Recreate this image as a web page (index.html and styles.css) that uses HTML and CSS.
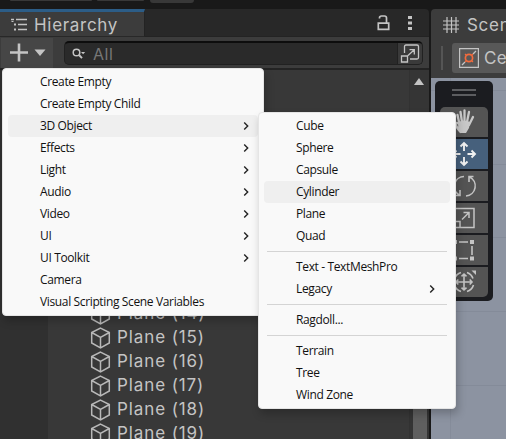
FILE: index.html
```html
<!DOCTYPE html>
<html lang="en">
<head>
<meta charset="utf-8">
<title>Hierarchy</title>
<link rel="stylesheet" href="styles.css">
</head>
<body>
<svg class="defs" aria-hidden="true">
  <symbol id="cube" viewBox="0 0 20 22"><path d="M10 1.2 18.8 5.5V16L10 20.8 1.2 16V5.5ZM1.2 5.5 10 10.3 18.8 5.5M10 10.3V20.8"/></symbol>
  <symbol id="chev" viewBox="0 0 6 8"><path d="M1.2.5 4.7 4 1.2 7.5"/></symbol>
</svg>
<div class="editor">
  <div class="topbar"><i class="b1"></i><i class="b2"></i><i class="b3"></i></div>
  <div class="panels">
    <section class="hierarchy">
      <header class="tabs">
        <div class="tab">
          <svg width="17" height="14" viewBox="0 0 17 14"><path d="M0 1.5h3M5 1.5h11M7 6.5h9M7 11.5h9" stroke="#c4c4c4" stroke-width="1.5"/><path d="M3 6.5h2M3 11.5h2M1.5 3v1" stroke="#c4c4c4" stroke-width="2"/></svg>
          <span>Hierarchy</span>
        </div>
        <div class="tabtools">
          <svg width="13" height="16" viewBox="0 0 13 16"><path d="M1.300 8.200h10.400v6.200H1.300zM2.500 3.500V3Q2.500 1 4.500 1h3Q9.500 1 9.500 3v5" fill="none" stroke="#c4c4c4" stroke-width="1.700"/></svg>
          <svg width="4" height="16" viewBox="0 0 4 16"><path d="M0 1h4v3H0zM0 6.500h4v3H0zM0 12h4v3H0z" fill="#c4c4c4"/></svg>
        </div>
      </header>
      <div class="toolbar">
        <div class="add">
          <svg width="52" height="30" viewBox="0 0 52 30"><path d="M9 14.500h18M18 5.500v18" stroke="#c4c4c4" stroke-width="2.600"/><path d="M33.500 11.500h11l-5.500 6.500z" fill="#c4c4c4"/></svg>
        </div>
        <div class="search">
          <svg class="mag" width="14" height="12" viewBox="0 0 14 12"><circle cx="4.500" cy="4.500" r="3.300" fill="none" stroke="#c4c4c4" stroke-width="1.500"/><path d="m7 7 3 3.200" stroke="#c4c4c4" stroke-width="1.900"/><path d="M9 4h4.200L11.100 6.200z" fill="#c4c4c4"/></svg>
          <span>All</span>
          <div class="pick"><svg width="20" height="20" viewBox="0 0 20 20" fill="none" stroke="#c4c4c4" stroke-width="1.300"><path d="M4.500 10V3.500Q4.500 2 6 2h11q1.500 0 1.500 1.500v11q0 1.500-1.500 1.500H10M1.500 13h6v6h-6zM8 12.500 14 7M9.500 6.700H14.300V11.500"/></svg></div>
        </div>
      </div>
      <div class="listarea">
        <div class="gutter"></div>
        <ul class="list">
          <li><svg><use href="#cube"/></svg>Plane (14)</li>
          <li><svg><use href="#cube"/></svg>Plane (15)</li>
          <li><svg><use href="#cube"/></svg>Plane (16)</li>
          <li><svg><use href="#cube"/></svg>Plane (17)</li>
          <li><svg><use href="#cube"/></svg>Plane (18)</li>
          <li><svg><use href="#cube"/></svg>Plane (19)</li>
        </ul>
        <div class="scroll"><svg width="10" height="7" viewBox="0 0 10 7"><path d="M0 7h10L5 0z" fill="#c4c4c4"/></svg><i></i></div>
      </div>
    </section>
    <section class="scene">
      <header class="scenetab">
        <svg width="16" height="16" viewBox="0 0 16 16"><path d="M4 0v16M8.500 0v16M13 0v16M0 4h16M0 8h16M0 12h16" stroke="#c4c4c4" stroke-width="1.200"/></svg>
        <span>Scene</span>
      </header>
      <div class="scenetools">
        <i class="grip"></i>
        <div class="center">
          <svg width="20" height="20" viewBox="0 0 20 20" fill="none"><path d="M.6.6h18.800v18.800H.6z" stroke="#c4c4c4" stroke-width="1.200"/><path d="m3 17 3-3M14 6l3-3" stroke="#c4c4c4" stroke-width="1.300"/><path d="m6 6 1.500 1.500m5 5L14 14m0-8-1.500 1.500m-5 5L6 14" stroke="#f26b3d" stroke-width="1.200"/><circle cx="10" cy="10" r="3.600" stroke="#f26b3d" stroke-width="1.700"/></svg>
          <span>Center</span>
        </div>
      </div>
      <div class="viewport">
        <div class="palette">
          <i class="handle"></i>
          <div class="tool"><svg viewBox="0 0 48 30"><path d="M20.500 25q-4.500-5-5-8.500 1.500-1.500 4 1L17.500 8M22 15 20.500 5M24.500 14V3.500M27 15l2-10M29 18l4-8" fill="none" stroke="#c8c8c8" stroke-width="2.300" stroke-linecap="round"/><path d="M18.500 15q5-3 11.500 0l-1 6-3 5h-5l-3-5z" fill="#c8c8c8"/></svg></div>
          <div class="tool on"><svg viewBox="0 0 48 30" fill="none" stroke="#f0f0f0" stroke-width="1.900"><path d="M24 12V4.500M24 18v7.500M20.500 15H13M27.500 15H35M20.500 7.500l3.500-3.500 3.500 3.500M20.500 22.500l3.500 3.500 3.500-3.500M16.500 11.500l-3.500 3.500 3.500 3.500M31.500 11.500l3.500 3.500-3.500 3.500"/></svg></div>
          <div class="tool"><svg viewBox="0 0 48 30" fill="none" stroke="#c4c4c4" stroke-width="1.600"><path d="M24 5.500A10 10 0 0 0 19 24M15.500 24.500H20V19M26 25A10 10 0 0 0 29.500 6M33.500 5.500H29V11"/></svg></div>
          <div class="tool"><svg viewBox="0 0 48 30" fill="none" stroke="#c4c4c4" stroke-width="1.500"><path d="M14.500 5.500h19.500v19H14.500zM14.500 18.500h5.500v6M22 16.500l7-7M23.500 9.500H29V15"/></svg></div>
          <div class="tool"><svg viewBox="0 0 48 30"><path d="M13 5h4v4h-4zM30 5h4v4h-4zM13 21.500h4v4h-4zM30 21.500h4v4h-4z" fill="#c4c4c4"/><path d="M19 7h9M19 23.500h9M15 11v9M32 11v9" stroke="#c4c4c4" stroke-width="1.600"/></svg></div>
          <div class="tool"><svg viewBox="0 0 48 30" fill="none" stroke="#c4c4c4" stroke-width="1.600"><path d="M27 5.500a10 10 0 0 1 6 6M33.500 18a10 10 0 0 1-6.500 6.500M21 24.500a10 10 0 0 1-6.500-6.500M14.500 12A10 10 0 0 1 21 5.500M24 7v16M16 15h16M21.500 9.300 24 7l2.500 2.300M21.500 20.700 24 23l2.500-2.300M18.300 12.500 16 15l2.300 2.500M29.700 12.500 32 15l-2.300 2.500"/><path d="M31.500 3.500H36v4.500z" fill="#c4c4c4" stroke="none"/></svg></div>
        </div>
      </div>
    </section>
  </div>
  <ul class="menu main">
    <li>Create Empty</li>
    <li>Create Empty Child</li>
    <li class="hl">3D Object<svg><use href="#chev"/></svg></li>
    <li>Effects<svg><use href="#chev"/></svg></li>
    <li>Light<svg><use href="#chev"/></svg></li>
    <li>Audio<svg><use href="#chev"/></svg></li>
    <li>Video<svg><use href="#chev"/></svg></li>
    <li>UI<svg><use href="#chev"/></svg></li>
    <li>UI Toolkit<svg><use href="#chev"/></svg></li>
    <li>Camera</li>
    <li>Visual Scripting Scene Variables</li>
  </ul>
  <ul class="menu sub">
    <li>Cube</li>
    <li>Sphere</li>
    <li>Capsule</li>
    <li class="hl">Cylinder</li>
    <li>Plane</li>
    <li>Quad</li>
    <li class="sep"></li>
    <li>Text - TextMeshPro</li>
    <li>Legacy<svg><use href="#chev"/></svg></li>
    <li class="sep"></li>
    <li>Ragdoll...</li>
    <li class="sep"></li>
    <li>Terrain</li>
    <li>Tree</li>
    <li>Wind Zone</li>
  </ul>
</div>
</body>
</html>
```
FILE: styles.css
```css
* { box-sizing: border-box; }
body { margin: 0; background: #191919; }
ul { list-style: none; margin: 0; padding: 0; }
svg { display: block; flex: none; }
.defs { position: absolute; width: 0; height: 0; }
.editor { position: relative; width: 506px; height: 439px; overflow: hidden; display: flex; flex-direction: column; font-family: Inter, sans-serif; color: #c4c4c4; }
.topbar { height: 9px; flex: none; display: flex; padding-left: 10px; }
.topbar i { background: #383838; border-radius: 0 0 3px 3px; height: 1px; }
.b1 { width: 82px; margin-right: 5px; }
.b2 { width: 47px; margin-right: 6px; }
.topbar .b3 { width: 44px; height: 3px; }
.panels { flex: 1; min-height: 0; display: flex; gap: 2px; }
.hierarchy { width: 429px; flex: none; display: flex; flex-direction: column; }
.tabs { height: 28px; flex: none; display: flex; justify-content: space-between; background: #282828; border-radius: 0 4px 0 0; border-bottom: 1px solid #232323; }
.tab { width: 145px; height: 28px; display: flex; align-items: center; gap: 6px; padding: 1px 0 0 11px; background: #3c3c3c; border-top: 3px solid #2c5d87; border-right: 1px solid #232323; font-size: 17px; letter-spacing: .7px; border-bottom: 1px solid #282828; }
.tabtools { display: flex; align-items: center; gap: 18px; padding: 1px 17px 0 0; }
.toolbar { height: 33px; flex: none; display: flex; background: #3c3c3c; border-bottom: 2px solid #232323; padding: 1px 6px 0 1px; }
.add { width: 52px; height: 30px; background: #464646; margin-right: 11px; }
.search { flex: 1; height: 24px; margin-top: 3px; background: #2a2a2a; border: 1px solid #212121; border-top: 2px solid #0d0d0d; border-radius: 5px; display: flex; align-items: center; padding-left: 7px; font-size: 16px; color: #777; overflow: hidden; }
.search span { margin-left: 7px; letter-spacing: .5px; }
.pick { margin-left: auto; width: 25px; height: 22px; padding: 0 0 0 2px; background: #3a3a3a; border-left: 1px solid #212121; }
.listarea { flex: 1; min-height: 0; display: flex; background: #383838; }
.gutter { width: 48px; background: #303030; }
.list { flex: 1; padding: 231px 0 0 42px; overflow: hidden; }
.list li { display: flex; align-items: center; height: 24px; gap: 6px; font-size: 17px; letter-spacing: .9px; }
.list svg { width: 21px; height: 22px; margin-top: 2px; fill: none; stroke: #b8b8b8; stroke-width: 1.500; }
.scroll { width: 20px; padding: 8px 0 0 3px; border-left: 1px solid #323232; background: #353535; display: flex; flex-direction: column; }
.scroll svg { margin-left: 1px; }
.scroll i { width: 14px; height: 60px; margin-top: 294px; background: #5f5f5f; }
.scene { flex: 1; min-width: 0; display: flex; flex-direction: column; overflow: hidden; }
.scenetab { height: 29px; flex: none; background: #3c3c3c; border-radius: 4px 0 0 0; display: flex; align-items: center; gap: 8px; padding: 2px 0 0 12px; font-size: 17px; letter-spacing: .7px; }
.scenetools { height: 40px; flex: none; background: #3c3c3c; display: flex; padding: 5px 0 0 10px; }
.grip { width: 6px; height: 24px; margin: 3px 9px 0 0; border: solid #555; border-width: 0 1px; }
.center { width: 90px; height: 30px; flex: none; background: #585858; border-radius: 3px; display: flex; align-items: center; gap: 5px; padding-left: 7px; font-size: 17px; letter-spacing: .3px; }
.viewport { flex: 1; min-height: 0; position: relative; background: linear-gradient(90deg, transparent 19px, #858c9a 19px, #858c9a 20px, transparent 20px), repeating-linear-gradient(transparent 0 12px, #848b99 12px 13px, transparent 13px 73.700px), #8c93a1; padding: 3px 0 0 4px; }
.palette { width: 58px; height: 220px; padding: 8px 5px 0; background: #1b1c20; border-radius: 5px; display: flex; flex-direction: column; gap: 2px; }
.handle { width: 24px; height: 7px; margin: 0 0 9px 12px; border: solid #5c5d60; border-width: 2px 0; }
.tool { height: 30px; background: #545454; }
.tool.on { background: #46607c; }
.tool:nth-child(2) { border-radius: 5px 5px 0 0; }
.tool:last-child { border-radius: 0 0 5px 5px; }
.tool svg { width: 48px; height: 30px; }
.menu { position: absolute; background: #f9f9f9; border: 1px solid #e5e5e5; border-radius: 4px; color: #111; font: 12px/20px "Open Sans", sans-serif; letter-spacing: -.36px; box-shadow: 2px 5px 9px rgba(0,0,0,.22); }
.menu li { height: 22px; display: flex; align-items: center; justify-content: space-between; border-radius: 4px; }
.menu .hl { background: #efefef; }
.menu svg { width: 6px; height: 8px; fill: none; stroke: #222; stroke-width: 1.400; }
.main { left: 2px; top: 68px; width: 262px; height: 248px; padding: 2px 5px; }
.main li { padding: 0 9px 0 32px; }
.sub { left: 258px; top: 112px; width: 198px; height: 297px; padding: 2px 5px; }
.sub li { padding: 0 15px 0 32px; }
.sub .sep { height: 1px; margin: 4px 3px; padding: 0; background: #d4d4d4; border-radius: 0; }
```
